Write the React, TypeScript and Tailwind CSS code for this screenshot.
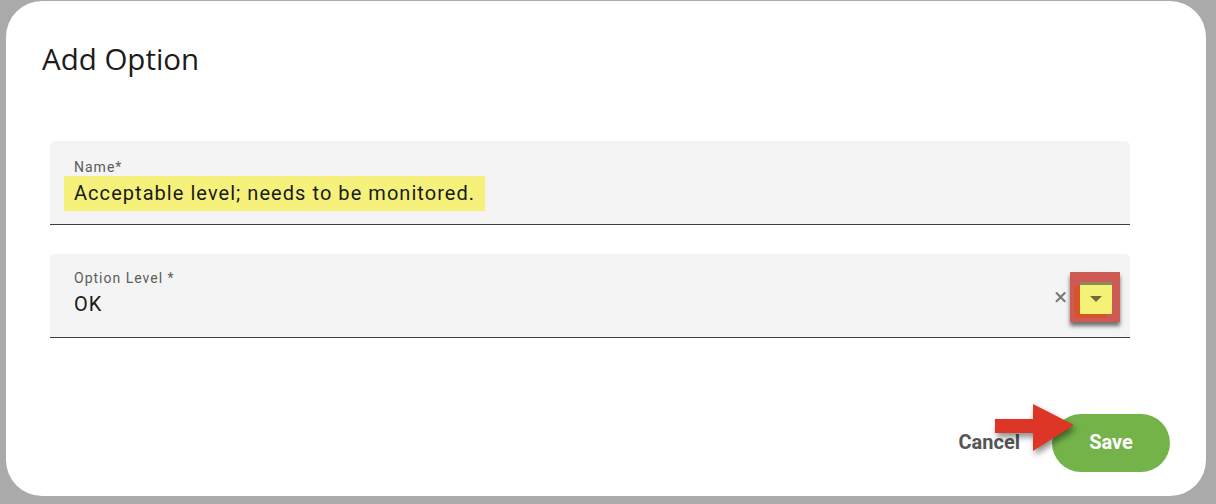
import React from "react";

function Field({ children, right }: { children: React.ReactNode; right?: React.ReactNode }) {
  return (
    <div className="relative h-[84px] bg-[#f4f4f4] rounded-t-[5px] border-b border-[#3d3d3d] flex items-center">
      <div className="flex-1 pl-[24px] self-start">{children}</div>
      {right}
    </div>
  );
}

const labelCls = "text-[14px] leading-[16px] text-[#5c5c5c] tracking-[1px]";

export default function App() {
  return (
    <div
      className="w-[1216px] h-[504px] bg-[#aaaaaa] pt-[1px] pl-[6px] pr-[10px] pb-[8px]"
      style={{ fontFamily: "Roboto, 'Liberation Sans', sans-serif" }}
    >
      <div className="relative w-full h-full bg-white rounded-[36px]">
        <h2
          className="pl-[36px] pt-[39px] text-[29.5px] leading-[38px] text-[#1c1c1c]"
          style={{ fontFamily: "'Open Sans', 'Noto Sans', sans-serif" }}
        >
          Add Option
        </h2>

        <div className="ml-[44px] mr-[76px] mt-[63px] flex flex-col gap-[29px]">
          <Field>
            <div className={`${labelCls} pt-[18px]`}>Name*</div>
            <div className="ml-[-10px] mt-[1px] inline-block bg-[#f5f17a] px-[10px] py-[6px] text-[20px] leading-[23px] text-[#1a1a1a] tracking-[1.05px]">
              Acceptable level; needs to be monitored.
            </div>
          </Field>

          <Field
            right={
              <div className="flex items-center pr-[10px] pt-[2px]">
                <span className="text-[#777] text-[24px] leading-none mr-[3px]">×</span>
                <div className="w-[50px] h-[50px] bg-[#cd5a55] shadow-[0_4px_4px_rgba(0,0,0,0.55)] relative">
                  <div className="absolute left-[4px] top-[14px] w-[10px] h-[32px] bg-[#d4552a]" />
                  <div className="absolute left-[4px] top-[41px] w-[32px] h-[5px] bg-[#d4552a]" />
                  <div className="absolute left-[10px] top-[10px] w-[32px] h-[32px] bg-[#f5f176] border-t-[3px] border-[#8a8a5a] flex items-center justify-center">
                    <svg width="12" height="7" viewBox="0 0 12 7">
                      <path d="M0 0 L12 0 L6 6 Z" fill="#6b6b3a" />
                    </svg>
                  </div>
                </div>
              </div>
            }
          >
            <div className={`${labelCls} pt-[16px]`}>Option Level *</div>
            <div className="mt-[7px] text-[20px] leading-[23px] text-[#1a1a1a] tracking-[1.05px]">OK</div>
          </Field>
        </div>

        <div className="absolute right-[36px] bottom-[24px] flex items-center gap-[32px]">
          <span className="text-[20px] font-bold text-[#555] mt-[-2px]">Cancel</span>
          <div className="w-[118px] h-[58px] rounded-full bg-[#73b34a] flex items-center justify-center text-white text-[20px] font-bold pb-[2px]">
            Save
          </div>
        </div>

        <svg
          className="absolute left-[987px] top-[400px]"
          width="80"
          height="56"
          viewBox="0 0 80 56"
          style={{ filter: "drop-shadow(2px 4px 3px rgba(0,0,0,0.45))" }}
        >
          <path d="M2 18 L40 18 L40 3 L81 24 L40 50 L40 32 L2 32 Z" fill="#dd3526" />
        </svg>
      </div>
    </div>
  );
}
